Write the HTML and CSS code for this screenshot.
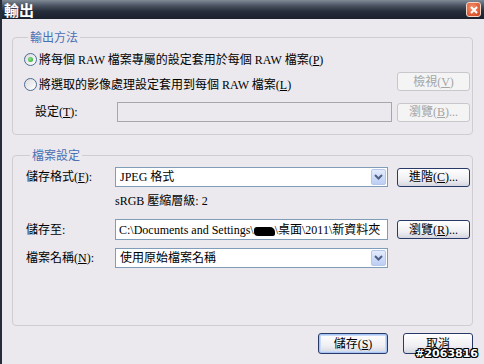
FILE: index.html
```html
<!DOCTYPE html>
<html lang="zh-Hant">
<head>
    <meta charset="UTF-8">
    <title>輸出</title>
    <link rel="stylesheet" href="styles.css">
</head>
<body>
    <div class="titlebar">
        <span class="title">輸出</span>
        <span class="close">
            <svg width="8" height="8" viewBox="0 0 8 8"><path d="M1 1L7 7M7 1L1 7" stroke="#fff" stroke-width="2"/></svg>
        </span>
    </div>

    <div class="content">
        <!-- 輸出方法 -->
        <fieldset class="group group-method">
            <legend>輸出方法</legend>
            <div class="row radio-row">
                <span class="radio checked"></span>
                <span>將每個 RAW 檔案專屬的設定套用於每個 RAW 檔案(<u>P</u>)</span>
            </div>
            <div class="row radio-row">
                <span class="radio"></span>
                <span>將選取的影像處理設定套用到每個 RAW 檔案(<u>L</u>)</span>
                <button class="btn side disabled view-btn">檢視(<u>V</u>)</button>
            </div>
            <div class="row setting-row">
                <span class="setting-label">設定(<u>T</u>):</span>
                <span class="input disabled wide"></span>
                <button class="btn side disabled">瀏覽(<u>B</u>)...</button>
            </div>
        </fieldset>

        <!-- 檔案設定 -->
        <fieldset class="group group-file">
            <legend>檔案設定</legend>
            <div class="row form-row r-format">
                <span class="label">儲存格式(<u>F</u>):</span>
                <span class="input combo">JPEG 格式<span class="arrow"><svg width="9" height="6" viewBox="0 0 9 6"><path d="M1 1L4.5 4.5L8 1" stroke="#4d6185" stroke-width="2" fill="none"/></svg></span></span>
                <button class="btn side">進階(<u>C</u>)...</button>
            </div>
            <div class="row form-row r-info">
                <span class="label"></span>
                <span>sRGB 壓縮層級: 2</span>
            </div>
            <div class="row form-row r-path">
                <span class="label">儲存至:</span>
                <span class="input path">C:\Documents and Settings\<span class="redact"></span>\桌面\2011\新資料夾</span>
                <button class="btn side">瀏覽(<u>R</u>)...</button>
            </div>
            <div class="row form-row r-name">
                <span class="label">檔案名稱(<u>N</u>):</span>
                <span class="input combo">使用原始檔案名稱<span class="arrow"><svg width="9" height="6" viewBox="0 0 9 6"><path d="M1 1L4.5 4.5L8 1" stroke="#4d6185" stroke-width="2" fill="none"/></svg></span></span>
            </div>
        </fieldset>

        <div class="actions">
            <button class="btn main default">儲存(<u>S</u>)</button>
            <button class="btn main">取消</button>
        </div>
    </div>

    <span class="watermark">#2063816</span>
</body>
</html>
```

FILE: styles.css
```css
body {
    margin: 0;
    width: 482px;
    height: 364px;
    overflow: hidden;
    background: #ebe9ed;
    border-left: 2px solid #262c38;
    font-family: "Liberation Serif", "Noto Sans CJK TC", serif;
    font-size: 12px;
    line-height: 16px;
    color: #000;
    position: relative;
}
.titlebar {
    height: 19px;
    background: linear-gradient(to bottom, #808a96 0%, #4a5361 30%, #262d3a 60%, #1a202c 100%);
    display: flex;
    align-items: center;
    justify-content: space-between;
    padding: 0 3px 0 2px;
}
.title {
    color: #fff;
    font-family: "Noto Sans CJK TC", sans-serif;
    font-weight: bold;
    font-size: 15px;
    line-height: 19px;
}
.close {
    width: 13px;
    height: 13px;
    border: 1px solid #f3d6c8;
    border-radius: 3px;
    background: radial-gradient(circle at 40% 35%, #f4916a, #d2401c);
    display: flex;
    align-items: center;
    justify-content: center;
}
.content {
    padding: 0 11px 0 10px;
}
.group {
    margin: 0;
    padding: 0 0 0 11px;
    border: 1px solid #cfcdd2;
    border-radius: 4px;
}
.group legend {
    color: #4a70b4;
    padding: 0 2px;
    margin-left: 4px;
    font-family: "Noto Sans CJK TC", sans-serif;
    line-height: 16px;
}
.group-method {
    margin-top: 10px;
    padding-top: 2px;
    padding-bottom: 10px;
}
.group-file {
    margin-top: 12px;
    padding-top: 2px;
    padding-left: 13px;
    padding-bottom: 57px;
}
.row {
    display: flex;
    align-items: center;
}
.radio-row {
    height: 25px;
    gap: 2px;
}
.radio {
    width: 11px;
    height: 11px;
    border: 1px solid #4a6a94;
    border-radius: 50%;
    background: linear-gradient(135deg, #dcdce0, #fff);
    display: flex;
    align-items: center;
    justify-content: center;
}
.radio.checked::after {
    content: "";
    width: 5px;
    height: 5px;
    border-radius: 50%;
    background: radial-gradient(circle at 40% 40%, #8ee08e, #21a121);
}
.setting-row {
    height: 24px;
    margin-top: 3px;
}
.setting-label {
    width: 82px;
    padding-left: 11px;
}
.input {
    height: 19px;
    border: 1px solid #7f9db9;
    background: #fff;
    display: flex;
    align-items: center;
    padding-left: 4px;
    box-sizing: border-box;
    position: relative;
}
.input.disabled {
    background: #ebe9ed;
    border-color: #a7a6aa;
}
.wide {
    width: 275px;
    height: 20px;
}
.btn {
    font-family: "Liberation Serif", "Noto Sans CJK TC", serif;
    font-size: 12px;
    color: #000;
    border: 1px solid #2a3a68;
    border-radius: 3px;
    background: linear-gradient(to bottom, #ffffff 0%, #f0f0f4 60%, #d6d6e0 100%);
    padding: 0;
    height: 19px;
    line-height: 16px;
}
.btn.side {
    width: 73px;
    margin-left: 5px;
}
.radio-row .btn.view-btn {
    margin-left: auto;
    margin-right: 2px;
    margin-top: -6px;
}
.btn.disabled {
    border-color: #c8c7cc;
    background: #f4f4f4;
    color: #a5a5a5;
}
.label {
    width: 89px;
    flex-shrink: 0;
}
.form-row .input {
    width: 273px;
    height: 20px;
}
.form-row .btn.side {
    margin-left: 9px;
}
.r-format {
    height: 20px;
    margin-top: 2px;
}
.r-info {
    margin-top: 6px;
    height: 16px;
}
.r-path {
    margin-top: 10px;
    height: 21px;
}
.r-path .input {
    height: 21px;
}
.r-name {
    margin-top: 8px;
    height: 20px;
}
.combo .arrow {
    position: absolute;
    right: 1px;
    top: 1px;
    bottom: 1px;
    width: 15px;
    border: 1px solid #b6c8ea;
    border-radius: 2px;
    box-sizing: border-box;
    background: linear-gradient(to bottom, #e4ecfd, #bccef4);
    display: flex;
    align-items: center;
    justify-content: center;
}
.path {
    white-space: nowrap;
    overflow: hidden;
    padding-left: 3px;
}
.redact {
    display: inline-block;
    width: 21px;
    height: 9px;
    background: #000;
    border-radius: 3px 5px 2px 4px;
    margin-top: 3px;
}
.actions {
    display: flex;
    justify-content: flex-end;
    gap: 15px;
    margin-top: 7px;
}
.btn.main {
    width: 70px;
    height: 21px;
}
.btn.default {
    box-shadow: inset 0 0 0 1px #a8c4f0, inset 0 0 0 2px #c8dafa;
}
.watermark {
    position: absolute;
    right: 6px;
    bottom: 4px;
    font-family: "DejaVu Sans", sans-serif;
    font-weight: bold;
    font-size: 11px;
    line-height: 12px;
    color: #fff;
    text-shadow: 1px 0 0 #000, -1px 0 0 #000, 0 1px 0 #000, 0 -1px 0 #000, 1px 1px 0 #000, -1px -1px 0 #000, 1px -1px 0 #000, -1px 1px 0 #000;
}
```
